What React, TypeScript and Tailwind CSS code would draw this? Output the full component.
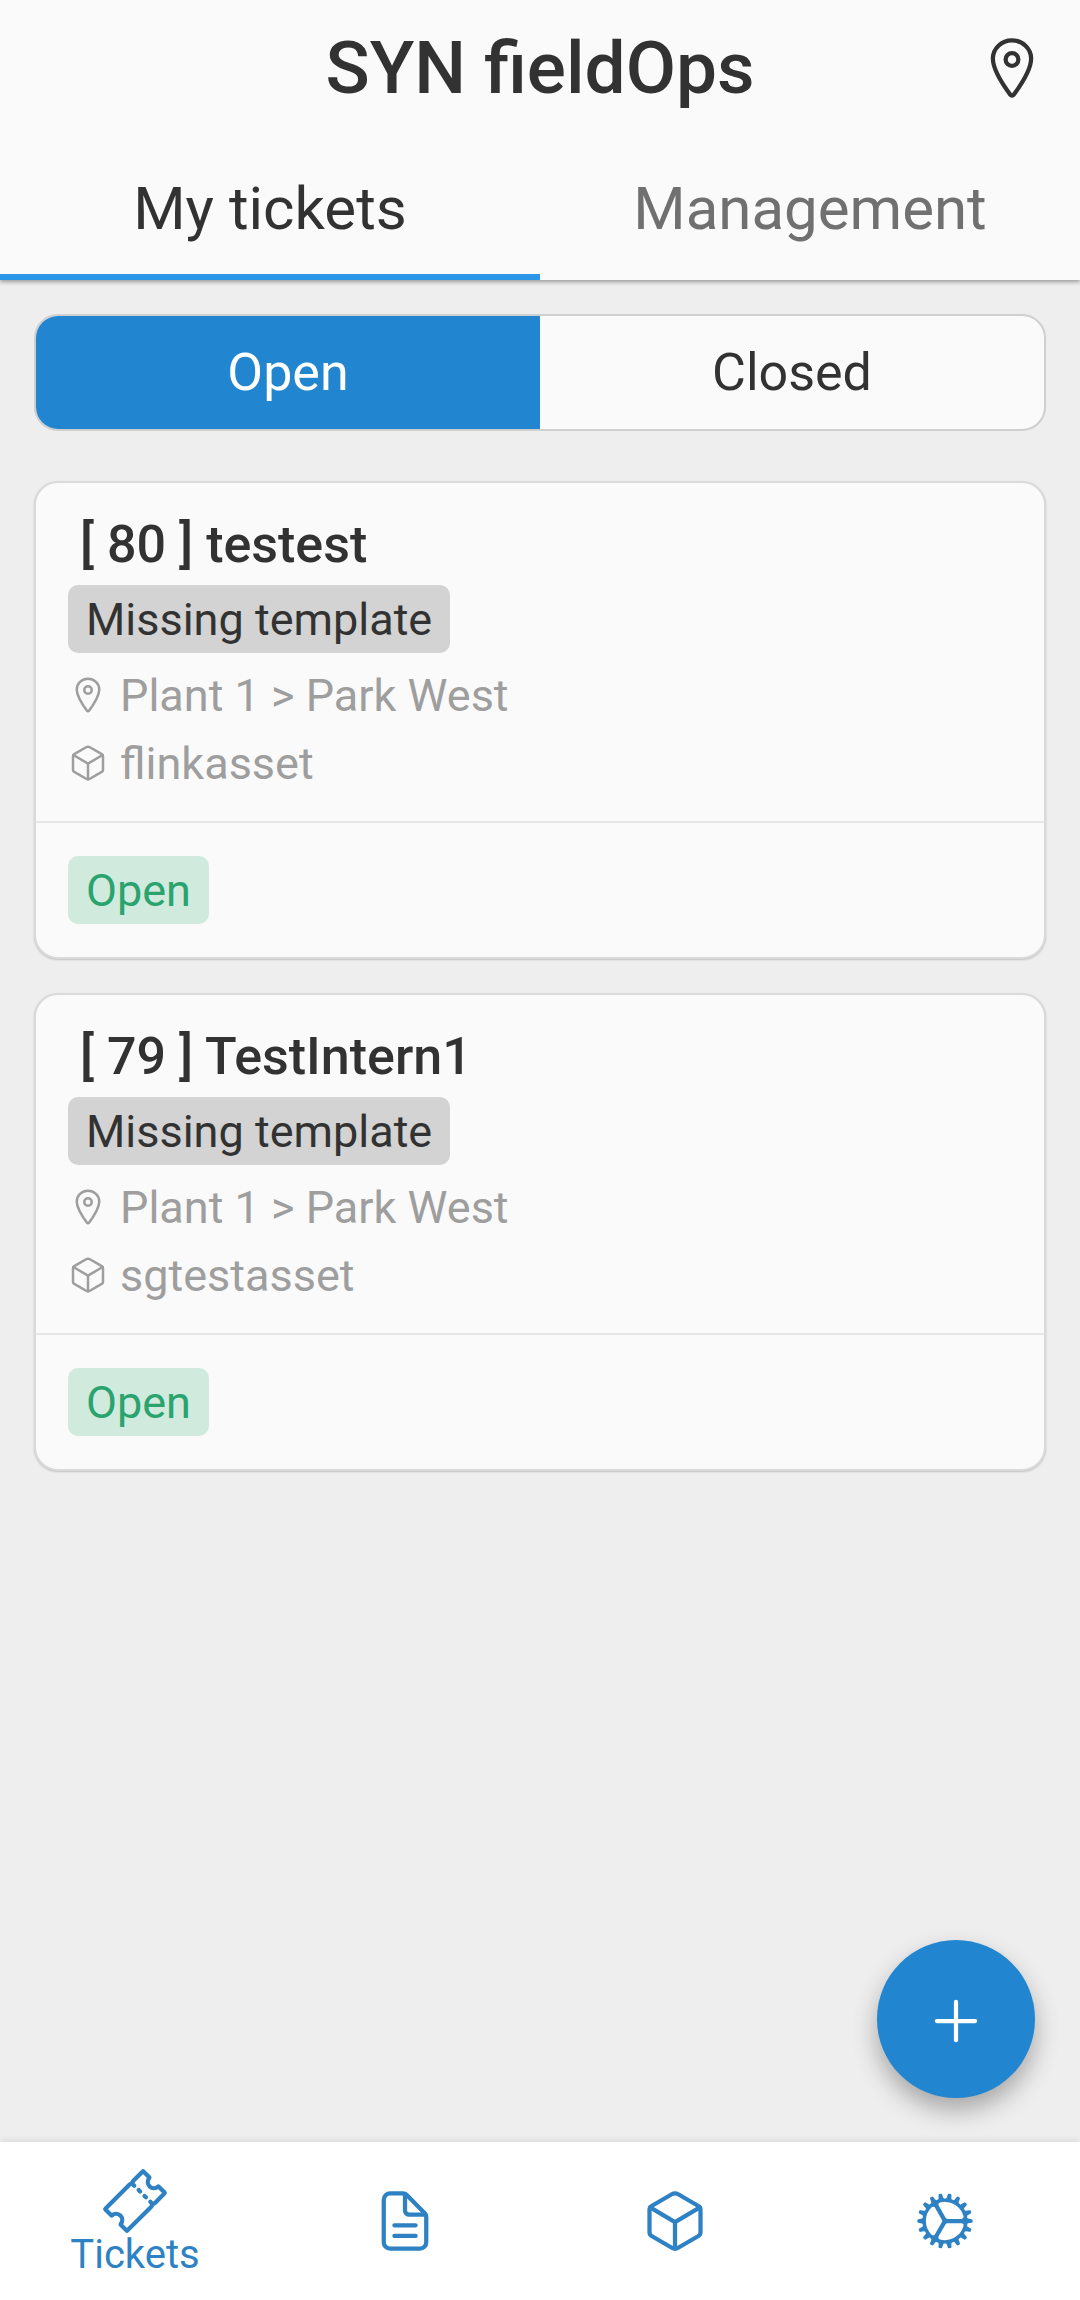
import { useState } from "react";
import type { ReactNode } from "react";
import {
  IoAddOutline,
  IoCogOutline,
  IoCubeOutline,
  IoDocumentTextOutline,
  IoLocationOutline,
  IoTicketOutline,
} from "react-icons/io5";

type Ticket = { id: number; title: string; location: string; asset: string };

const tickets: Ticket[] = [
  { id: 80, title: "testest", location: "Plant 1 > Park West", asset: "flinkasset" },
  { id: 79, title: "TestIntern1", location: "Plant 1 > Park West", asset: "sgtestasset" },
];

function Detail({ icon, children }: { icon: ReactNode; children: ReactNode }) {
  return (
    <p className="flex h-[68px] items-center gap-3 text-[45px] leading-none text-[#9e9e9e]">
      {icon}
      {children}
    </p>
  );
}

function TicketCard({ ticket }: { ticket: Ticket }) {
  return (
    <article className="rounded-3xl border-2 border-[#dadada] bg-[#fafafa] shadow-[0_1px_2px_rgba(0,0,0,0.2)]">
      <div className="px-8 pt-8 pb-6">
        <h2 className="pl-3 text-[52px] leading-[60px] font-medium">
          [ {ticket.id} ] {ticket.title}
        </h2>
        <span className="mt-[10px] mb-2 flex h-[68px] w-fit items-center rounded-[10px] bg-[#d3d3d3] px-[18px] text-[45px] leading-none">
          Missing template
        </span>
        <Detail icon={<IoLocationOutline className="size-10" />}>{ticket.location}</Detail>
        <Detail icon={<IoCubeOutline className="size-10" />}>{ticket.asset}</Detail>
      </div>
      <div className="border-t-2 border-[#e6e6e6] px-8 py-[33px]">
        <span className="flex h-[68px] w-fit items-center rounded-[10px] bg-[#d0eadd] px-[18px] text-[45px] leading-none text-[#2aa36f]">
          Open
        </span>
      </div>
    </article>
  );
}

const navItems = [
  { name: "Tickets", Icon: IoTicketOutline },
  { name: "Documents", Icon: IoDocumentTextOutline },
  { name: "Assets", Icon: IoCubeOutline },
  { name: "Settings", Icon: IoCogOutline },
];

export default function App() {
  const [tab, setTab] = useState("My tickets");
  const [filter, setFilter] = useState("Open");
  const [page, setPage] = useState("Tickets");

  return (
    <div className="flex min-h-screen flex-col bg-[#eeeeee] font-[Roboto,sans-serif] text-[#323232]">
      <header className="relative bg-[#fafafa] shadow-[0_2px_4px_rgba(0,0,0,0.35)]">
        <div className="grid h-[136px] grid-cols-[1fr_auto_1fr] items-center px-[34px]">
          <h1 className="col-start-2 text-[73px] leading-none font-medium">SYN fieldOps</h1>
          <button type="button" aria-label="Location" className="justify-self-end">
            <IoLocationOutline className="size-[68px]" />
          </button>
        </div>
        <div role="tablist" className="grid grid-cols-2">
          {["My tickets", "Management"].map((name) => (
            <button
              key={name}
              type="button"
              role="tab"
              aria-selected={tab === name}
              onClick={() => setTab(name)}
              className={
                tab === name
                  ? "h-36 border-b-6 border-[#2b95e6] pt-2 text-[60px] leading-none"
                  : "h-36 border-b-6 border-transparent pt-2 text-[60px] leading-none text-[#707070]"
              }
            >
              {name}
            </button>
          ))}
        </div>
      </header>

      <main className="relative flex-1 px-[34px] pt-[34px]">
        <div className="grid h-[117px] grid-cols-2 overflow-hidden rounded-3xl border-2 border-[#cfcfcf] bg-[#fafafa]">
          {["Open", "Closed"].map((name) => (
            <button
              key={name}
              type="button"
              aria-pressed={filter === name}
              onClick={() => setFilter(name)}
              className={
                filter === name
                  ? "bg-[#2185d0] text-[52px] leading-none text-white"
                  : "text-[52px] leading-none"
              }
            >
              {name}
            </button>
          ))}
        </div>
        <section className="mt-[50px] flex flex-col gap-[34px]">
          {tickets.map((ticket) => (
            <TicketCard key={ticket.id} ticket={ticket} />
          ))}
        </section>
        <button
          type="button"
          aria-label="New ticket"
          className="absolute right-[45px] bottom-11 flex size-[158px] items-center justify-center rounded-full bg-[#2185d0] pt-1 text-white shadow-[0_12px_24px_rgba(0,0,0,0.3)]"
        >
          <IoAddOutline className="size-[68px]" />
        </button>
      </main>

      <nav className="relative grid h-[158px] grid-cols-4 bg-white text-[#2e82c4] shadow-[0_-2px_6px_rgba(0,0,0,0.08)]">
        {navItems.map(({ name, Icon }) => (
          <button
            key={name}
            type="button"
            aria-label={name}
            onClick={() => setPage(name)}
            className="flex flex-col items-center justify-center text-[40px] leading-none"
          >
            <Icon className="size-[68px]" />
            {page === name && <span>{name}</span>}
          </button>
        ))}
      </nav>
    </div>
  );
}
